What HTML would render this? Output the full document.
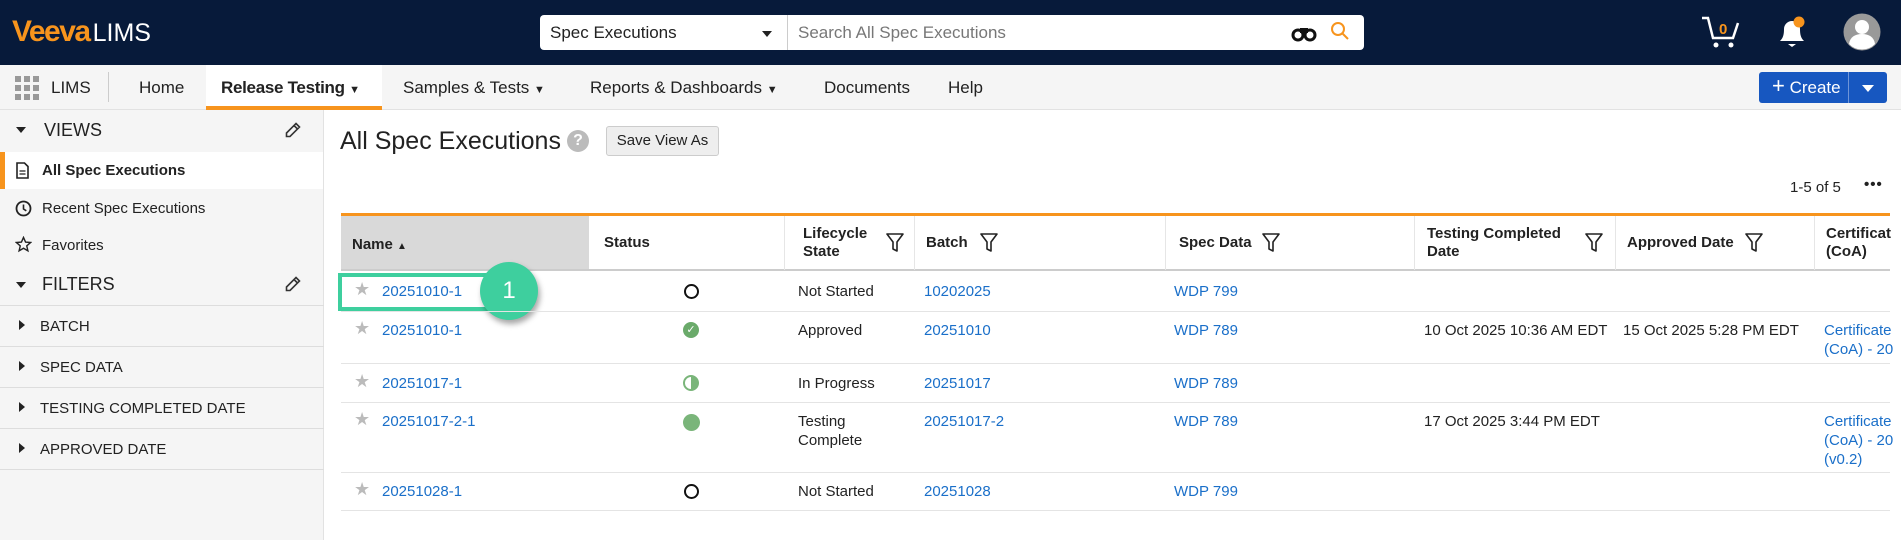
<!DOCTYPE html>
<html><head><meta charset="utf-8"><style>
*{box-sizing:border-box;margin:0;padding:0}
body{width:1901px;height:540px;overflow:hidden;background:#fff;font-family:"Liberation Sans",Arial,sans-serif;color:#222;position:relative}
.a{position:absolute;white-space:nowrap}
.nt{font-size:17px;top:78px;color:#222}
.sl{font-size:15px}
.hl{position:absolute;height:1px;background:#ddd;left:0;width:324px}
.lnk{color:#1a6fc9}
.c{position:absolute;white-space:nowrap;font-size:15px;line-height:19px}
.th{position:absolute;white-space:nowrap;font-size:15px;font-weight:bold;color:#222;line-height:18px}
.rl{position:absolute;height:1px;background:#e4e4e4;left:341px;width:1549px}
.vl{position:absolute;width:1px;background:#e6e6e6;top:216px;height:54px}
.st{position:absolute;font-size:18px;color:#bbb;left:354px}
.fn{position:absolute}
</style></head><body>
<div class="a" style="left:0;top:0;width:1901px;height:65px;background:#071a3a"></div>
<div class="a" style="left:12px;top:15px;font-size:30px;font-weight:bold;color:#f7941d;letter-spacing:-1.5px">Veeva<span style="color:#fff;font-weight:normal;font-size:25px;letter-spacing:0;margin-left:3px">LIMS</span></div>
<div class="a" style="left:540px;top:15px;width:824px;height:35px;background:#fff;border-radius:4px"></div>
<div class="a" style="left:550px;top:23px;font-size:17px">Spec Executions</div>
<div class="a" style="left:762px;top:31px;border:5px solid transparent;border-top:6px solid #222"></div>
<div class="a" style="left:787px;top:15px;width:1px;height:35px;background:#ccc"></div>
<div class="a" style="left:798px;top:23px;font-size:17px;color:#777">Search All Spec Executions</div>
<svg class="a" style="left:1291px;top:24px" width="26" height="18" viewBox="0 0 26 18"><circle cx="7" cy="11" r="5" fill="none" stroke="#111" stroke-width="3"/><circle cx="19" cy="11" r="5" fill="none" stroke="#111" stroke-width="3"/><rect x="9" y="4" width="8" height="5" fill="#111"/></svg>
<svg class="a" style="left:1330px;top:21px" width="20" height="20" viewBox="0 0 20 20"><circle cx="8" cy="8" r="6" fill="none" stroke="#f7941d" stroke-width="2"/><path d="M12.5 12.5L18 18" stroke="#f7941d" stroke-width="2"/></svg>
<svg class="a" style="left:1701px;top:16px" width="42" height="34" viewBox="0 0 42 34"><path d="M1 2h6l5 20h20l5-15" fill="none" stroke="#fff" stroke-width="2.5"/><circle cx="15" cy="29" r="2.5" fill="#fff"/><circle cx="30" cy="29" r="2.5" fill="#fff"/><text x="18" y="18" font-size="15" font-weight="bold" fill="#f7941d" font-family="Liberation Sans">0</text></svg>
<svg class="a" style="left:1776px;top:14px" width="32" height="36" viewBox="0 0 32 36"><path d="M4 27c3-3 4-6 4-12a8 8 0 0 1 16 0c0 6 1 9 4 12z" fill="#fff"/><path d="M12 30h8l-4 3z" fill="#fff"/><circle cx="23" cy="8" r="5.5" fill="#f7941d"/></svg>
<svg class="a" style="left:1843px;top:13px" width="38" height="38" viewBox="0 0 38 38"><circle cx="19" cy="19" r="18.5" fill="#999"/><circle cx="19" cy="14" r="7" fill="#fff"/><path d="M6 31c1-7 6-10 13-10s12 3 13 10a18 18 0 0 1-26 0z" fill="#fff"/></svg>

<div class="a" style="left:0;top:65px;width:1901px;height:45px;background:#f5f5f5;border-bottom:1px solid #e2e2e2"></div>
<svg class="a" style="left:15px;top:76px" width="25" height="25" viewBox="0 0 25 25"><g fill="#999"><rect x="0" y="0" width="6" height="6"/><rect x="9" y="0" width="6" height="6"/><rect x="18" y="0" width="6" height="6"/><rect x="0" y="9" width="6" height="6"/><rect x="9" y="9" width="6" height="6"/><rect x="18" y="9" width="6" height="6"/><rect x="0" y="18" width="6" height="6"/><rect x="9" y="18" width="6" height="6"/><rect x="18" y="18" width="6" height="6"/></g></svg>
<div class="a nt" style="left:51px">LIMS</div>
<div class="a" style="left:108px;top:72px;width:1px;height:30px;background:#ccc"></div>
<div class="a nt" style="left:139px">Home</div>
<div class="a" style="left:206px;top:65px;width:176px;height:45px;background:#fff;border-bottom:4px solid #f7941d"></div>
<div class="a nt" style="left:221px;font-weight:bold;letter-spacing:-0.3px">Release Testing <span style="font-size:11px">▼</span></div>
<div class="a nt" style="left:403px">Samples &amp; Tests <span style="font-size:11px">▼</span></div>
<div class="a nt" style="left:590px">Reports &amp; Dashboards <span style="font-size:11px">▼</span></div>
<div class="a nt" style="left:824px">Documents</div>
<div class="a nt" style="left:948px">Help</div>
<div class="a" style="left:1759px;top:72px;width:128px;height:31px;background:#1757c0;border-radius:3px"></div>
<div class="a" style="left:1848px;top:72px;width:1px;height:31px;background:#6f95d8"></div>
<div class="a" style="left:1772px;top:78px;font-size:17px;color:#fff"><span style="font-size:22px;line-height:16px">+</span> Create</div>
<div class="a" style="left:1862px;top:85px;border:6px solid transparent;border-top:7px solid #fff"></div>

<div class="a" style="left:0;top:110px;width:324px;height:430px;background:#f5f5f5;border-right:1px solid #e2e2e2"></div>
<div class="a" style="left:16px;top:127px;border:5px solid transparent;border-top:6px solid #222"></div>
<div class="a" style="left:44px;top:120px;font-size:18px">VIEWS</div>
<svg class="a" style="left:285px;top:122px" width="16" height="16" viewBox="0 0 16 16"><path d="M11 1.5l3.5 3.5L5 14.5H1.5V11z M9 3.5l3.5 3.5" fill="none" stroke="#333" stroke-width="1.6"/></svg>
<div class="a" style="left:0;top:152px;width:323px;height:37px;background:#fff;border-left:5px solid #f7941d"></div>
<svg class="a" style="left:16px;top:162px" width="13" height="17" viewBox="0 0 13 17"><path d="M1 1h7.5l3.5 3.5V16H1z" fill="none" stroke="#222" stroke-width="1.6"/><path d="M3.5 9h6M3.5 12h6" stroke="#222" stroke-width="1.3"/></svg>
<div class="a sl" style="left:42px;top:162px;font-weight:bold">All Spec Executions</div>
<svg class="a" style="left:15px;top:200px" width="17" height="17" viewBox="0 0 17 17"><circle cx="8.5" cy="8.5" r="7" fill="none" stroke="#222" stroke-width="1.8"/><path d="M8.5 4.5v4.5l2.8 1.8" fill="none" stroke="#222" stroke-width="1.6"/></svg>
<div class="a sl" style="left:42px;top:200px">Recent Spec Executions</div>
<svg class="a" style="left:15px;top:236px" width="17" height="17" viewBox="0 0 24 24"><path d="M12 2l2.9 6.6 7.1.6-5.4 4.7 1.6 7L12 17.3 5.8 20.9l1.6-7L2 9.2l7.1-.6z" fill="none" stroke="#222" stroke-width="2"/></svg>
<div class="a sl" style="left:42px;top:237px">Favorites</div>
<div class="a" style="left:16px;top:282px;border:5px solid transparent;border-top:6px solid #222"></div>
<div class="a" style="left:42px;top:274px;font-size:18px">FILTERS</div>
<svg class="a" style="left:285px;top:276px" width="16" height="16" viewBox="0 0 16 16"><path d="M11 1.5l3.5 3.5L5 14.5H1.5V11z M9 3.5l3.5 3.5" fill="none" stroke="#333" stroke-width="1.6"/></svg>
<div class="hl" style="top:305px"></div>
<div class="a" style="left:19px;top:320px;border:5px solid transparent;border-left:6px solid #222"></div>
<div class="a sl" style="left:40px;top:318px">BATCH</div>
<div class="hl" style="top:346px"></div>
<div class="a" style="left:19px;top:361px;border:5px solid transparent;border-left:6px solid #222"></div>
<div class="a sl" style="left:40px;top:359px">SPEC DATA</div>
<div class="hl" style="top:387px"></div>
<div class="a" style="left:19px;top:402px;border:5px solid transparent;border-left:6px solid #222"></div>
<div class="a sl" style="left:40px;top:400px">TESTING COMPLETED DATE</div>
<div class="hl" style="top:428px"></div>
<div class="a" style="left:19px;top:443px;border:5px solid transparent;border-left:6px solid #222"></div>
<div class="a sl" style="left:40px;top:441px">APPROVED DATE</div>
<div class="hl" style="top:469px"></div>

<div class="a" style="left:340px;top:127px;font-size:25px">All Spec Executions</div>
<div class="a" style="left:567px;top:130px;width:22px;height:22px;border-radius:50%;background:#bbb;color:#fff;font-size:16px;font-weight:bold;text-align:center;line-height:22px">?</div>
<div class="a" style="left:606px;top:126px;width:113px;height:30px;background:#eee;border:1px solid #ccc;border-radius:3px;font-size:15px;text-align:center;line-height:28px">Save View As</div>
<div class="a" style="left:1790px;top:179px;font-size:15px">1-5 of 5</div>
<div class="a" style="left:1864px;top:176px;font-size:15px;font-weight:bold;letter-spacing:1px">•••</div>

<div class="a" style="left:341px;top:213px;width:1549px;height:3px;background:#f7941d"></div>
<div class="a" style="left:341px;top:216px;width:248px;height:54px;background:#d9d9d9"></div>
<div class="a" style="left:341px;top:269px;width:1549px;height:2px;background:#ccc"></div>
<div class="th" style="left:352px;top:236px">Name <span style="font-size:10px">▲</span></div>
<div class="th" style="left:604px;top:234px">Status</div>
<div class="vl" style="left:784px"></div>
<div class="th" style="left:803px;top:225px">Lifecycle<br>State</div>
<svg class="fn" style="left:886px;top:233px" width="18" height="20" viewBox="0 0 18 20"><path d="M1 1h16l-6 8v9l-4-2V9z" fill="none" stroke="#222" stroke-width="1.6" stroke-linejoin="round"/></svg>
<div class="vl" style="left:914px"></div>
<div class="th" style="left:926px;top:234px">Batch</div>
<svg class="fn" style="left:980px;top:233px" width="18" height="20" viewBox="0 0 18 20"><path d="M1 1h16l-6 8v9l-4-2V9z" fill="none" stroke="#222" stroke-width="1.6" stroke-linejoin="round"/></svg>
<div class="vl" style="left:1165px"></div>
<div class="th" style="left:1179px;top:234px">Spec Data</div>
<svg class="fn" style="left:1262px;top:233px" width="18" height="20" viewBox="0 0 18 20"><path d="M1 1h16l-6 8v9l-4-2V9z" fill="none" stroke="#222" stroke-width="1.6" stroke-linejoin="round"/></svg>
<div class="vl" style="left:1414px"></div>
<div class="th" style="left:1427px;top:225px">Testing Completed<br>Date</div>
<svg class="fn" style="left:1585px;top:233px" width="18" height="20" viewBox="0 0 18 20"><path d="M1 1h16l-6 8v9l-4-2V9z" fill="none" stroke="#222" stroke-width="1.6" stroke-linejoin="round"/></svg>
<div class="vl" style="left:1615px"></div>
<div class="th" style="left:1627px;top:234px">Approved Date</div>
<svg class="fn" style="left:1745px;top:233px" width="18" height="20" viewBox="0 0 18 20"><path d="M1 1h16l-6 8v9l-4-2V9z" fill="none" stroke="#222" stroke-width="1.6" stroke-linejoin="round"/></svg>
<div class="vl" style="left:1814px"></div>
<div class="th" style="left:1826px;top:225px">Certificat<br>(CoA)</div>

<div class="st" style="top:279px">★</div><div class="c lnk" style="left:382px;top:282px">20251010-1</div>
<div class="a" style="left:684px;top:284px;width:15px;height:15px;border:2px solid #111;border-radius:50%"></div>
<div class="c" style="left:798px;top:282px">Not Started</div>
<div class="c lnk" style="left:924px;top:282px">10202025</div>
<div class="c lnk" style="left:1174px;top:282px">WDP 799</div>
<div class="a" style="left:338px;top:273px;width:152px;height:38px;border:4px solid #3ecf9e"></div>
<div class="a" style="left:480px;top:262px;width:58px;height:58px;border-radius:50%;background:#3ecf9e;color:#fff;font-size:24px;text-align:center;line-height:58px;box-shadow:2px 4px 6px rgba(0,0,0,.35)">1</div>
<div class="rl" style="top:311px"></div>
<div class="st" style="top:318px">★</div><div class="c lnk" style="left:382px;top:321px">20251010-1</div>
<div class="a" style="left:683px;top:322px;width:16px;height:16px;background:#6aaa6a;border-radius:50%;color:#fff;font-size:11px;text-align:center;line-height:16px">✓</div>
<div class="c" style="left:798px;top:321px">Approved</div>
<div class="c lnk" style="left:924px;top:321px">20251010</div>
<div class="c lnk" style="left:1174px;top:321px">WDP 789</div>
<div class="c" style="left:1424px;top:321px">10 Oct 2025 10:36 AM EDT</div>
<div class="c" style="left:1623px;top:321px">15 Oct 2025 5:28 PM EDT</div>
<div class="c lnk" style="left:1824px;top:321px">Certificate<br>(CoA) - 20</div>
<div class="rl" style="top:363px"></div>
<div class="st" style="top:371px">★</div><div class="c lnk" style="left:382px;top:374px">20251017-1</div>
<div class="a" style="left:683px;top:375px;width:16px;height:16px;border:2px solid #7ab57a;border-radius:50%;background:linear-gradient(90deg,#fff 50%,#7ab57a 50%)"></div>
<div class="c" style="left:798px;top:374px">In Progress</div>
<div class="c lnk" style="left:924px;top:374px">20251017</div>
<div class="c lnk" style="left:1174px;top:374px">WDP 789</div>
<div class="rl" style="top:402px"></div>
<div class="st" style="top:409px">★</div><div class="c lnk" style="left:382px;top:412px">20251017-2-1</div>
<div class="a" style="left:683px;top:414px;width:17px;height:17px;background:#7ab57a;border-radius:50%"></div>
<div class="c" style="left:798px;top:412px">Testing<br>Complete</div>
<div class="c lnk" style="left:924px;top:412px">20251017-2</div>
<div class="c lnk" style="left:1174px;top:412px">WDP 789</div>
<div class="c" style="left:1424px;top:412px">17 Oct 2025 3:44 PM EDT</div>
<div class="c lnk" style="left:1824px;top:412px">Certificate<br>(CoA) - 20<br>(v0.2)</div>
<div class="rl" style="top:472px"></div>
<div class="st" style="top:479px">★</div><div class="c lnk" style="left:382px;top:482px">20251028-1</div>
<div class="a" style="left:684px;top:484px;width:15px;height:15px;border:2px solid #111;border-radius:50%"></div>
<div class="c" style="left:798px;top:482px">Not Started</div>
<div class="c lnk" style="left:924px;top:482px">20251028</div>
<div class="c lnk" style="left:1174px;top:482px">WDP 799</div>
<div class="rl" style="top:510px"></div>
</body></html>
